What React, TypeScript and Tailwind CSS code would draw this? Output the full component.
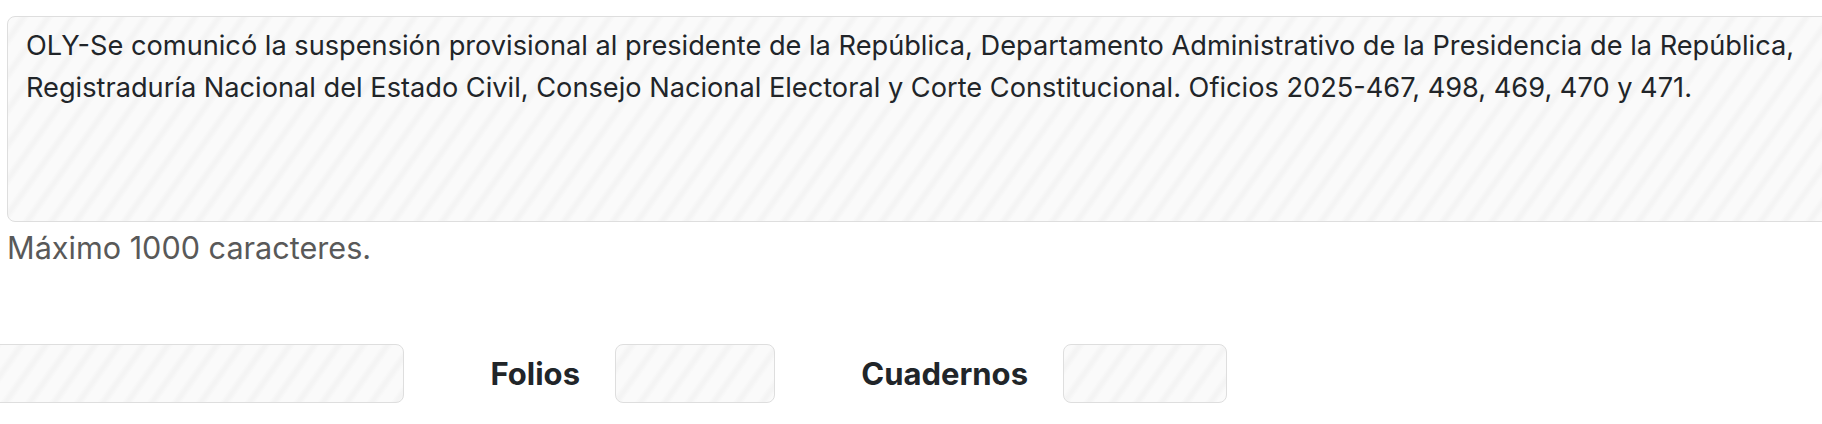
import React from "react";

const NOTE =
  "OLY-Se comunicó la suspensión provisional al presidente de la República, Departamento Administrativo de la Presidencia de la República, Registraduría Nacional del Estado Civil, Consejo Nacional Electoral y Corte Constitucional. Oficios 2025-467, 498, 469, 470 y 471.";

// stripes used for readonly fields
const readonly =
  "bg-[image:repeating-linear-gradient(125deg,#fafafa_0px,#fafafa_8px,#f4f4f4_12px,#f4f4f4_14px,#fafafa_18px,#fafafa_20px)]";

function Field({ className }: { className: string }) {
  return (
    <input
      type="text"
      readOnly
      className={`h-[59px] rounded-[8px] border border-[#dedede] outline-none ${readonly} ${className}`}
    />
  );
}

export default function App() {
  return (
    <div className="relative h-[424px] w-[1822px] overflow-hidden bg-white text-[#212529] [font-family:Inter,'Liberation_Sans',sans-serif]">
      <div className="pl-[7px] pt-[16px]">
        <textarea
          readOnly
          value={NOTE}
          className={`block h-[206px] w-[1860px] resize-none overflow-hidden rounded-[8px] border border-[#dedede] px-[18px] pt-[8px] text-[27.2px] leading-[42px] text-[#212529] outline-none ${readonly}`}
        />
        <div className="mt-[2px] text-[30.6px] leading-[48px] text-[#595959]">Máximo 1000 caracteres.</div>
      </div>

      <div className="mt-[72px] flex items-center">
        <Field className="-ml-[20px] w-[424px]" />
        <label className="w-[211px] pr-[35px] text-right text-[31px] font-bold leading-none">Folios</label>
        <Field className="w-[160px]" />
        <label className="w-[288px] pr-[35px] text-right text-[31px] font-bold leading-none">Cuadernos</label>
        <Field className="w-[164px]" />
      </div>
    </div>
  );
}
